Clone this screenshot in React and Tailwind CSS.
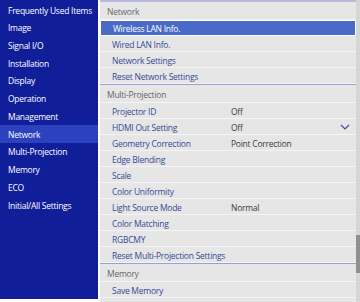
const sideItems = [
  "Frequently Used Items",
  "Image",
  "Signal I/O",
  "Installation",
  "Display",
  "Operation",
  "Management",
  "Network",
  "Multi-Projection",
  "Memory",
  "ECO",
  "Initial/All Settings",
];

const sections = [
  {
    title: "Network",
    rows: [
      { label: "Wireless LAN Info.", active: true },
      { label: "Wired LAN Info." },
      { label: "Network Settings" },
      { label: "Reset Network Settings" },
    ],
  },
  {
    title: "Multi-Projection",
    rows: [
      { label: "Projector ID", value: "Off" },
      { label: "HDMI Out Setting", value: "Off", dropdown: true },
      { label: "Geometry Correction", value: "Point Correction" },
      { label: "Edge Blending" },
      { label: "Scale" },
      { label: "Color Uniformity" },
      { label: "Light Source Mode", value: "Normal" },
      { label: "Color Matching" },
      { label: "RGBCMY" },
      { label: "Reset Multi-Projection Settings" },
    ],
  },
  {
    title: "Memory",
    rows: [{ label: "Save Memory" }, { label: "" }],
  },
];

const Chevron = () => (
  <svg width="10" height="6" viewBox="0 0 10 6" className="absolute right-[6px] top-[5px]">
    <path d="M1 1 L5 5 L9 1" fill="none" stroke="#3b4aa0" strokeWidth="1.1" />
  </svg>
);

const Row = ({ row }) => (
  <div
    className={`relative flex h-[16px] shrink-0 items-center border-b pt-[3px] ${
      row.active
        ? "border border-white bg-[#4a6ac8] text-white"
        : "border-[#f4f4f4] bg-[#e6e6e6] text-[#3a4898]"
    }`}
  >
    <span className="w-[131px] shrink-0 pl-[12px] whitespace-nowrap">{row.label}</span>
    {row.value && <span className="whitespace-nowrap text-[#3c3c3c]">{row.value}</span>}
    {row.dropdown && <Chevron />}
  </div>
);

export default function App() {
  return (
    <div
      className="flex h-[302px] w-[360px] overflow-hidden bg-white text-[8.5px] leading-none tracking-[-0.25px]"
      style={{ fontFamily: '"Open Sans", "Liberation Sans", sans-serif' }}
    >
      {/* Sidebar */}
      <aside className="flex h-[299px] w-[98px] shrink-0 flex-col bg-[#101e9a] pt-[1px] font-medium text-white">
        {sideItems.map((item) => (
          <div
            key={item}
            className={`flex h-[17.73px] shrink-0 items-center pl-[8px] pt-[2px] whitespace-nowrap ${
              item === "Network" ? "bg-[#2b41bd]" : ""
            }`}
          >
            {item}
          </div>
        ))}
      </aside>

      {/* Settings list */}
      <main className="ml-[2px] flex flex-1 overflow-hidden">
        <div className="flex w-[256px] flex-col border-t-[2px] border-[#b7b9dc] bg-[#e6e6e6] font-medium">
          {sections.map((section, idx) => (
            <div key={section.title} className="flex flex-col">
              {idx > 0 && <div className="h-[1px] shrink-0 bg-[#9aa0d2]" />}
              <div className="flex h-[18px] shrink-0 items-center border-b border-[#f4f4f4] pl-[7px] pt-[3px] text-[#666]">
                {section.title}
              </div>
              {section.rows.map((row, i) => (
                <Row key={i} row={row} />
              ))}
            </div>
          ))}
        </div>
        {/* Scrollbar */}
        <div className="relative w-[4px] shrink-0 bg-[#d6d6d6]">
          <div className="absolute left-0 top-[235px] h-[38px] w-[4px] bg-[#8f8f8f]" />
        </div>
      </main>
    </div>
  );
}
